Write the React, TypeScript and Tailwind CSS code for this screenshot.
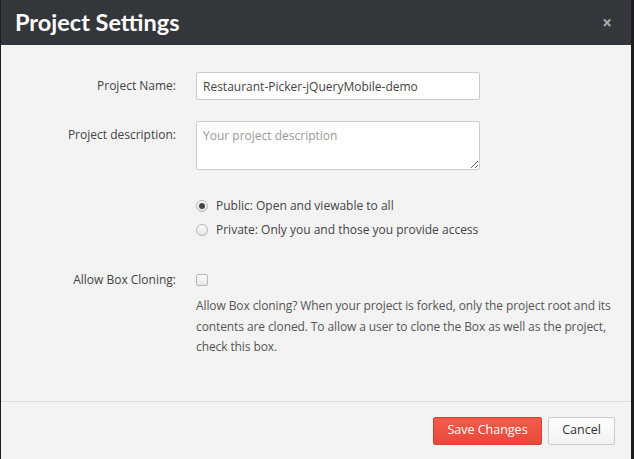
import React from "react";

export default function App() {
  const font = { fontFamily: '"Open Sans", "DejaVu Sans", sans-serif' };
  return (
    <div className="w-[634px] h-[459px] bg-[#1d1d1d] flex overflow-hidden" style={font}>
      <div className="ml-px w-[630px] h-full bg-[#f3f3f3] flex flex-col">
        <div className="h-[45px] shrink-0 bg-[#33373b] flex items-center justify-between pl-[14px] pr-[19px]">
          <h1 className="text-white font-bold text-[23.5px] leading-none [font-family:Lato,'Open_Sans',sans-serif]">
            Project Settings
          </h1>
          <span className="text-[#a9adb0] font-bold text-[17px] leading-none">×</span>
        </div>

        <div className="flex-1 pt-[27px] text-[12px] text-[#555]">
          <div className="grid grid-cols-[175px_1fr] gap-x-[20px]">
            <label className="text-right text-[#444] h-[28px] flex items-center justify-end">Project Name:</label>
            <div>
              <input
                readOnly
                value="Restaurant-Picker-jQueryMobile-demo"
                className="w-[284px] h-[28px] border border-[#ccc] rounded-[2px] bg-white px-[6px] text-[12px] text-[#444] outline-none"
              />
            </div>

            <label className="mt-[21px] text-right text-[#444] h-[28px] flex items-center justify-end">Project description:</label>
            <div className="mt-[21px]">
              <textarea
                placeholder="Your project description"
                className="block w-[284px] h-[49px] border border-[#ccc] rounded-[2px] bg-white px-[6px] pt-[5px] text-[12px] text-[#444] placeholder:text-[#999] outline-none resize"
              />
            </div>

            <div />
            <div className="mt-[26px] flex flex-col gap-[4px]">
              <div className="flex items-center gap-[8px] h-[20px]">
                <span className="w-[12px] h-[12px] rounded-full border border-[#b5b5b5] bg-gradient-to-b from-[#fdfdfd] to-[#e6e6e6] flex items-center justify-center">
                  <span className="w-[6px] h-[6px] rounded-full bg-[#444]" />
                </span>
                <span className="text-[#444]">Public: Open and viewable to all</span>
              </div>
              <div className="flex items-center gap-[8px] h-[20px]">
                <span className="w-[12px] h-[12px] rounded-full border border-[#b5b5b5] bg-gradient-to-b from-[#fdfdfd] to-[#e6e6e6]" />
                <span className="text-[#444]">Private: Only you and those you provide access</span>
              </div>
            </div>

            <label className="mt-[30px] text-right text-[#444] h-[20px] flex items-center justify-end">Allow Box Cloning:</label>
            <div className="mt-[30px] h-[20px] flex items-center">
              <span className="w-[12px] h-[12px] rounded-[2px] border border-[#b5b5b5] bg-gradient-to-b from-[#fdfdfd] to-[#e6e6e6]" />
            </div>

            <div />
            <p className="mt-[6px] pr-[4px] leading-[20.5px] text-[#555] tracking-[-0.1px]">
              Allow Box cloning? When your project is forked, only the project root and its contents are cloned. To allow a user to clone the Box as well as the project, check this box.
            </p>
          </div>
        </div>

        <div className="h-[58px] shrink-0 border-t border-[#d9dbdd] flex items-center justify-end gap-[6px] pr-[16px]">
          <button className="h-[28px] w-[109px] rounded-[2px] border border-[#d9402f] bg-gradient-to-b from-[#f35d4d] to-[#e8473a] text-white text-[12.5px]">
            Save Changes
          </button>
          <button className="h-[28px] w-[67px] rounded-[2px] border border-[#ccc] bg-gradient-to-b from-white to-[#f2f2f2] text-[#333] text-[12.5px]">
            Cancel
          </button>
        </div>
      </div>
    </div>
  );
}
